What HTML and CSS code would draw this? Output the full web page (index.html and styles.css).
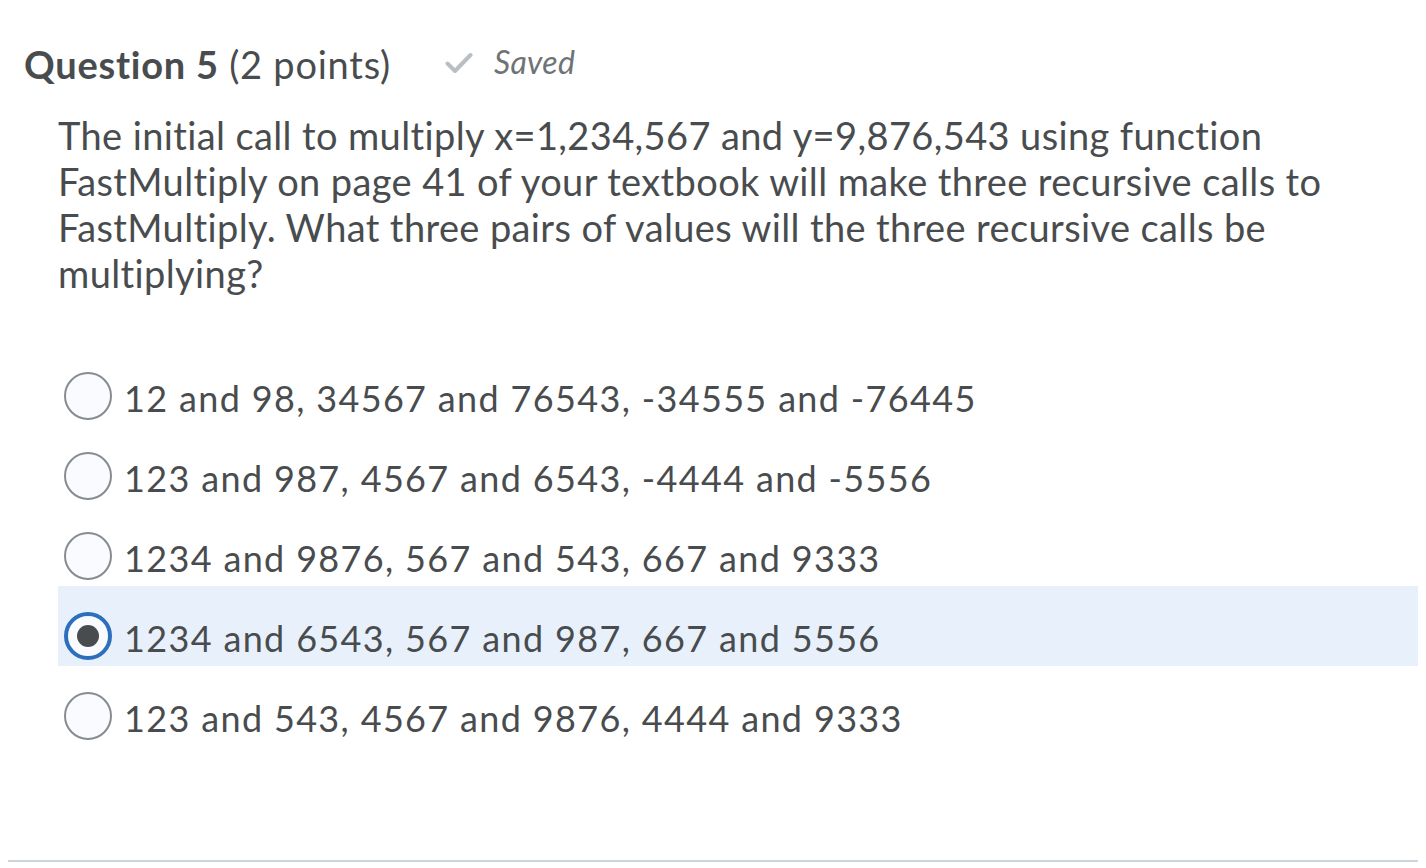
FILE: index.html
```html
<!DOCTYPE html>
<html lang="en">
<head>
<meta charset="utf-8">
<title>Question 5</title>
<link rel="stylesheet" href="styles.css">
</head>
<body>
<div class="page">
  <div class="q-header">
    <h2 class="q-title"><strong>Question 5</strong> (2 points)</h2>
    <span class="saved">
      <svg class="check" width="28" height="22" viewBox="0 0 28 22"><path d="M2.5 11.5 L10 19 L25.5 3" fill="none" stroke="#b8bfc3" stroke-width="4" stroke-linecap="round" stroke-linejoin="round"/></svg>
      <em>Saved</em>
    </span>
  </div>
  <p class="q-text">The initial call to multiply x=1,234,567 and y=9,876,543 using function FastMultiply on page 41 of your textbook will make three recursive calls to FastMultiply. What three pairs of values will the three recursive calls be multiplying?</p>
  <ul class="options">
    <li class="option"><span class="radio"></span><span class="label">12 and 98, 34567 and 76543, -34555 and -76445</span></li>
    <li class="option"><span class="radio"></span><span class="label">123 and 987, 4567 and 6543, -4444 and -5556</span></li>
    <li class="option"><span class="radio"></span><span class="label">1234 and 9876, 567 and 543, 667 and 9333</span></li>
    <li class="option selected"><span class="radio"></span><span class="label">1234 and 6543, 567 and 987, 667 and 5556</span></li>
    <li class="option"><span class="radio"></span><span class="label">123 and 543, 4567 and 9876, 4444 and 9333</span></li>
  </ul>
  <hr class="divider">
</div>
</body>
</html>
```
FILE: styles.css
```css
html, body {
  margin: 0;
  padding: 0;
  background: #ffffff;
}
body {
  font-family: Lato, "Noto Sans", sans-serif;
  color: #494c4e;
  font-variant-ligatures: none;
  font-feature-settings: "liga" 0, "clig" 0, "dlig" 0;
}
.page {
  padding: 0 8px;
}
.q-header {
  display: flex;
  align-items: center;
  height: 46px;
  padding-top: 41px;
  margin-left: 16px;
}
.q-title {
  margin: 0;
  font-size: 38px;
  font-weight: 400;
  line-height: 46px;
  letter-spacing: 0.75px;
  color: #494c4e;
}
.q-title strong {
  font-weight: 700;
}
.saved {
  display: flex;
  align-items: center;
  margin-left: 54px;
  margin-top: -6px;
  color: #6e7376;
  font-size: 32px;
  letter-spacing: 0.3px;
}
.check {
  display: block;
  margin-right: 21px;
  margin-top: 4px;
}
.saved em {
  font-style: italic;
}
.q-text {
  margin: 25px 0 0 50px;
  font-size: 38px;
  line-height: 46px;
  letter-spacing: 0.38px;
  max-width: 1300px;
}
.options {
  list-style: none;
  margin: 50px 0 0 50px;
  padding: 0;
}
.option {
  display: flex;
  align-items: center;
  height: 80px;
  box-sizing: border-box;
  padding: 26px 0 6px 6px;
  font-size: 36px;
}
.option.selected {
  background: #e8f1fb;
}
.radio {
  flex: none;
  width: 48px;
  height: 48px;
  box-sizing: border-box;
  border: 2px solid #878c8f;
  border-radius: 50%;
  background: #f9fbff;
  margin-right: 12px;
  display: flex;
  align-items: center;
  justify-content: center;
}
.selected .radio {
  border: 4px solid #2c6fbd;
  background: #f9fbff;
}
.selected .radio::after {
  content: "";
  width: 22px;
  height: 22px;
  border-radius: 50%;
  background: #494c4e;
}
.label {
  line-height: 48px;
  padding-top: 3px;
  letter-spacing: 1.34px;
}
.divider {
  border: 0;
  height: 2px;
  background: #cdd5dc;
  margin: 114px 0 0 0;
}
```
